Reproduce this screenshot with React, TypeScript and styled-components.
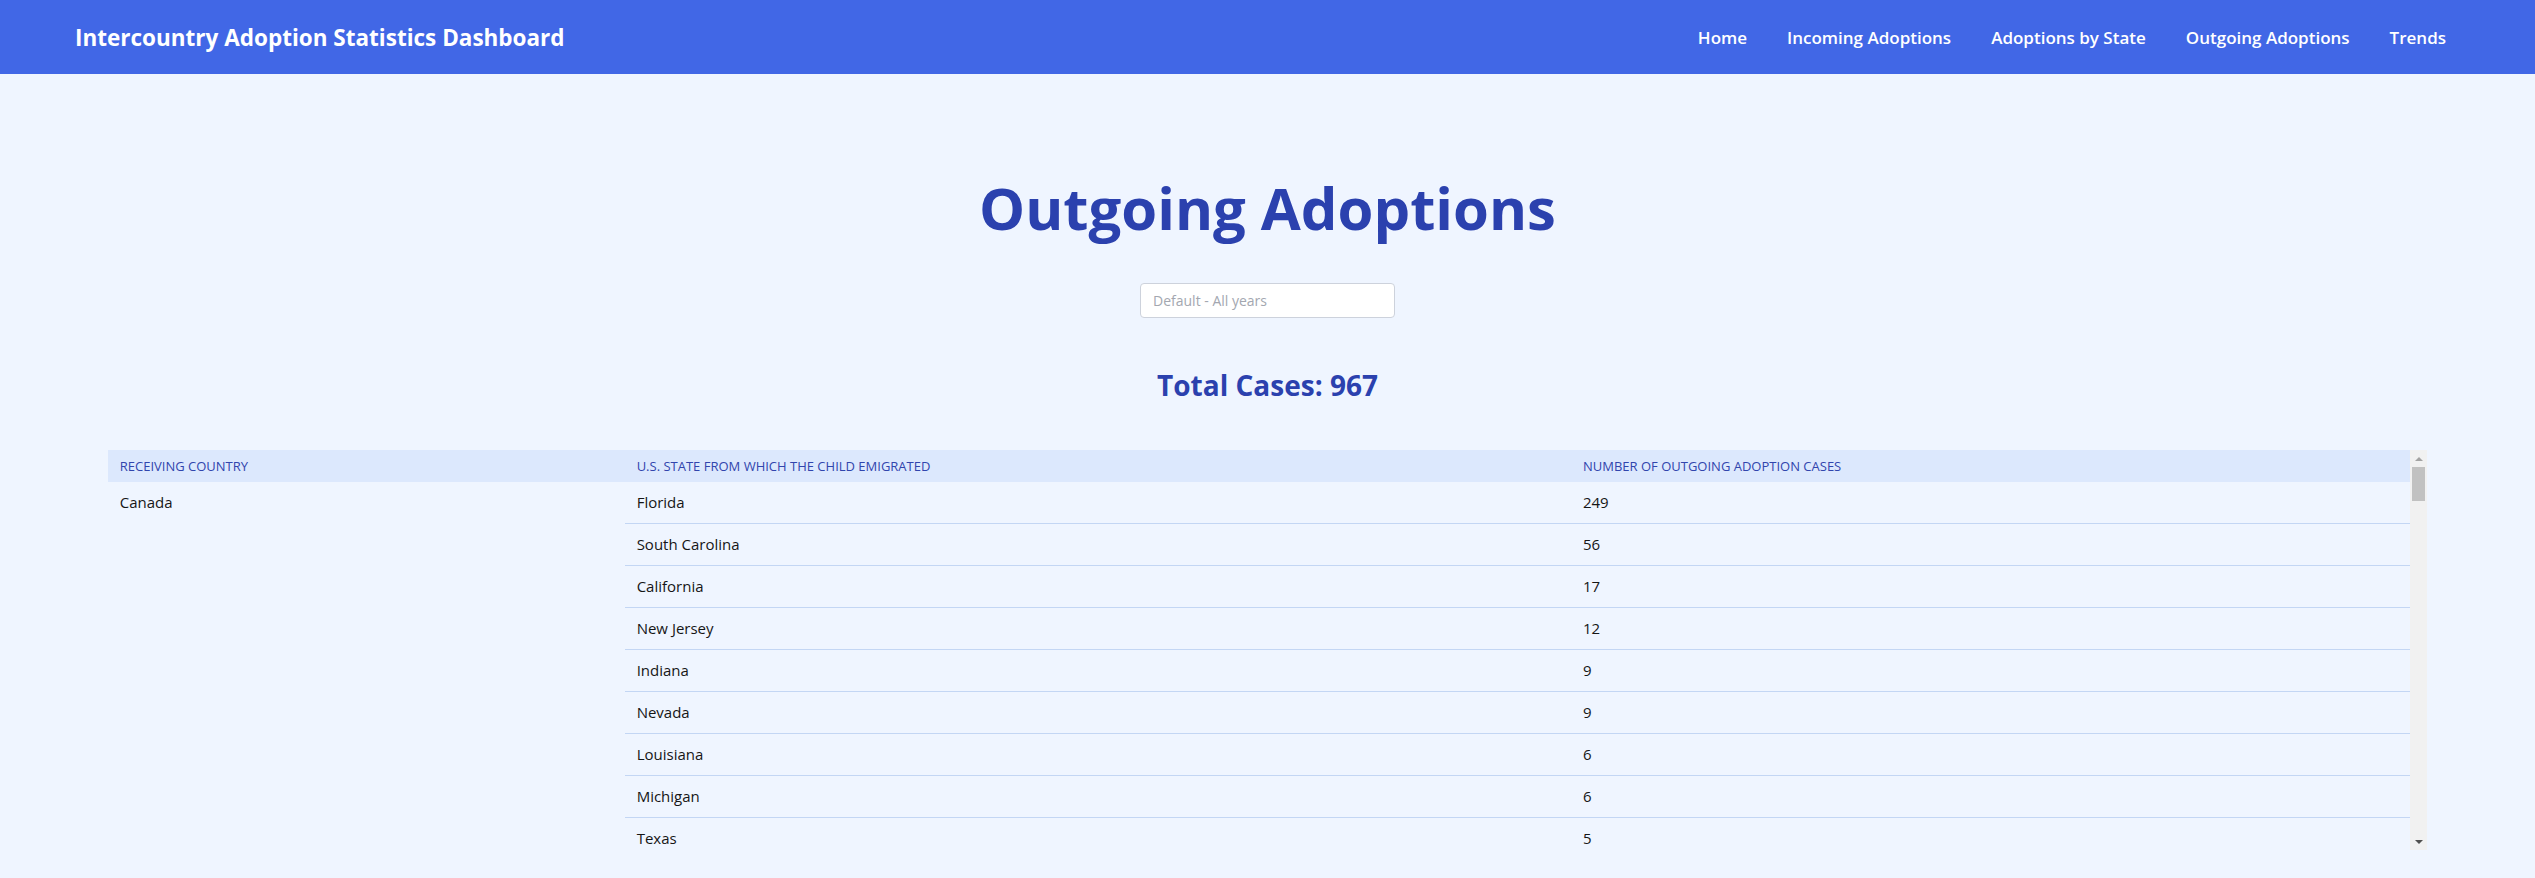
import { FC } from "react";
import styled, { createGlobalStyle } from "styled-components";

type Group = { country: string; states: [string, number][] };

const data: Group[] = [
  {
    country: "Canada",
    states: [
      ["Florida", 249], ["South Carolina", 56], ["California", 17], ["New Jersey", 12],
      ["Indiana", 9], ["Nevada", 9], ["Louisiana", 6], ["Michigan", 6], ["Texas", 5],
      ["Georgia", 4], ["Illinois", 4], ["New York", 4], ["Arizona", 3], ["Ohio", 3],
      ["Pennsylvania", 3], ["Colorado", 2], ["Maryland", 2], ["Missouri", 2],
      ["North Carolina", 2], ["Tennessee", 2], ["Utah", 2], ["Virginia", 2],
      ["Washington", 2], ["Alabama", 1], ["Connecticut", 1], ["Iowa", 1], ["Kansas", 1],
      ["Kentucky", 1], ["Massachusetts", 1], ["Minnesota", 1], ["Oklahoma", 1],
      ["Oregon", 1], ["Wisconsin", 1],
    ],
  },
  {
    country: "Netherlands",
    states: [
      ["Florida", 88], ["Texas", 31], ["California", 18], ["Georgia", 12], ["Illinois", 9],
      ["New York", 7], ["Ohio", 6], ["Arizona", 5], ["Pennsylvania", 4], ["Colorado", 3],
      ["Michigan", 3], ["North Carolina", 2], ["Virginia", 2], ["Washington", 2],
      ["Indiana", 1], ["Missouri", 1], ["Oregon", 1],
    ],
  },
  {
    country: "Ireland",
    states: [
      ["Florida", 41], ["California", 14], ["Texas", 9], ["New York", 6], ["Georgia", 4],
      ["Illinois", 3], ["Massachusetts", 2], ["New Jersey", 2], ["Ohio", 1], ["Virginia", 1],
    ],
  },
  {
    country: "Mexico",
    states: [
      ["Texas", 43], ["California", 19], ["Arizona", 8], ["Illinois", 4], ["Nevada", 3],
      ["Florida", 2], ["New Mexico", 2], ["Colorado", 1],
    ],
  },
  {
    country: "Germany",
    states: [
      ["Florida", 40], ["California", 11], ["Texas", 7], ["Nevada", 4], ["New York", 3],
      ["Arizona", 2], ["Colorado", 2], ["Pennsylvania", 1], ["Washington", 1],
    ],
  },
  {
    country: "United Kingdom",
    states: [
      ["Florida", 18], ["California", 9], ["New York", 6], ["Texas", 4], ["Georgia", 3],
      ["Illinois", 2], ["Maryland", 1], ["Michigan", 1],
    ],
  },
  {
    country: "Switzerland",
    states: [["Florida", 14], ["California", 6], ["New York", 3], ["Texas", 2], ["Virginia", 1]],
  },
  {
    country: "Australia",
    states: [["California", 9], ["Florida", 7], ["Texas", 3], ["Washington", 2], ["Hawaii", 1]],
  },
  {
    country: "Belgium",
    states: [["Florida", 12], ["Georgia", 4], ["California", 3], ["Ohio", 1]],
  },
  {
    country: "Norway",
    states: [["Florida", 5], ["Minnesota", 3]],
  },
];

const navItems = ["Home", "Incoming Adoptions", "Adoptions by State", "Outgoing Adoptions", "Trends"];

const totalCases = data.reduce(
  (sum, g) => sum + g.states.reduce((s, [, n]) => s + n, 0),
  0
);

// scroll rail: viewport 400px, header 32px, rows 42px, two 17px arrow buttons
const VIEW_H = 400;
const rowCount = data.reduce((n, g) => n + g.states.length, 0);
const contentH = 32 + rowCount * 42;
const thumbH = Math.max(20, Math.round(((VIEW_H - 34) * VIEW_H) / contentH));

const App: FC = () => {
  return (
    <>
      <GlobalStyle />
      <Header>
        <Brand>Intercountry Adoption Statistics Dashboard</Brand>
        <Nav>
          {navItems.map((item) => (
            <NavLink key={item} href="#">
              {item}
            </NavLink>
          ))}
        </Nav>
      </Header>
      <Main>
        <PageTitle>Outgoing Adoptions</PageTitle>
        <YearInput type="text" placeholder="Default - All years" />
        <Total>Total Cases: {totalCases}</Total>
        <ScrollFrame>
          <TableViewport>
            <Table>
              <colgroup>
                <col style={{ width: "22.45%" }} />
                <col style={{ width: "41.1%" }} />
                <col style={{ width: "36.45%" }} />
              </colgroup>
              <thead>
                <tr>
                  <Th>Receiving Country</Th>
                  <Th>U.S. State from which the child emigrated</Th>
                  <Th>Number of outgoing adoption cases</Th>
                </tr>
              </thead>
              <tbody>
                {data.map((group) =>
                  group.states.map(([state, count], i) => (
                    <tr key={group.country + state}>
                      {i === 0 && (
                        <CountryCell rowSpan={group.states.length}>{group.country}</CountryCell>
                      )}
                      <Td>{state}</Td>
                      <Td>{count}</Td>
                    </tr>
                  ))
                )}
              </tbody>
            </Table>
          </TableViewport>
          <Rail>
            <RailButton>
              <Arrow $dir="up" />
            </RailButton>
            <Thumb style={{ height: thumbH }} />
            <RailSpacer />
            <RailButton>
              <Arrow $dir="down" />
            </RailButton>
          </Rail>
        </ScrollFrame>
      </Main>
    </>
  );
};

export default App;

const GlobalStyle = createGlobalStyle`
  html, body {
    margin: 0;
    padding: 0;
    background: #eff5ff;
    font-family: "Open Sans", "Noto Sans", sans-serif;
  }
  * {
    box-sizing: border-box;
  }
`;

const Header = styled.header`
  display: flex;
  justify-content: space-between;
  align-items: center;
  height: 74px;
  padding: 0 73px 0 75px;
  background-color: #4167e6;
`;

const Brand = styled.h1`
  margin: 0;
  font-size: 22.5px;
  font-weight: 700;
  color: #fff;
`;

const Nav = styled.nav`
  display: flex;
  gap: 8px;
`;

const NavLink = styled.a`
  padding: 8px 16px;
  color: #fff;
  font-size: 17px;
  font-weight: 600;
  text-decoration: none;
`;

const Main = styled.main`
  display: flex;
  flex-direction: column;
  align-items: center;
  padding: 99px 0 24px;
`;

const PageTitle = styled.h2`
  margin: 0;
  font-size: 58px;
  line-height: 1.2;
  font-weight: 700;
  color: #2b41ae;
`;

const YearInput = styled.input`
  margin-top: 40px;
  width: 255px;
  height: 35px;
  padding: 0 12px;
  border: 1px solid #cdd2dc;
  border-radius: 4px;
  background: #fff;
  font-family: inherit;
  font-size: 14px;
  color: #333;

  &::placeholder {
    color: #a3a7b0;
  }
`;

const Total = styled.h3`
  margin: 51px 0 0;
  font-size: 28px;
  line-height: 1.2;
  font-weight: 700;
  color: #2b41ae;
`;

const ScrollFrame = styled.div`
  display: flex;
  margin-top: 48px;
  width: 91.5%;
  height: ${VIEW_H}px;
`;

const TableViewport = styled.div`
  flex: 1;
  overflow-y: auto;
  scrollbar-width: none;

  &::-webkit-scrollbar {
    display: none;
  }
`;

const Rail = styled.div`
  display: flex;
  flex-direction: column;
  width: 17px;
  background: #f1f1f1;
`;

const RailButton = styled.div`
  display: flex;
  justify-content: center;
  align-items: center;
  height: 17px;
`;

const Arrow = styled.span<{ $dir: "up" | "down" }>`
  width: 0;
  height: 0;
  border-left: 4px solid transparent;
  border-right: 4px solid transparent;
  ${({ $dir }) =>
    $dir === "up" ? "border-bottom: 4px solid #a3a3a3;" : "border-top: 4px solid #505050;"}
`;

const Thumb = styled.div`
  margin: 0 2px;
  background: #c1c1c1;
`;

const RailSpacer = styled.div`
  flex: 1;
`;

const Table = styled.table`
  width: 100%;
  border-collapse: collapse;
  table-layout: fixed;
`;

const Th = styled.th`
  position: sticky;
  top: 0;
  padding: 8px 12px;
  line-height: 16px;
  background: #dce8fd;
  color: #3145ad;
  font-size: 13px;
  font-weight: 500;
  text-align: left;
  text-transform: uppercase;
`;

const Td = styled.td`
  padding: 12px;
  line-height: 17px;
  font-size: 15px;
  color: #161616;
  vertical-align: top;
  border-bottom: 1px solid #c3d6f4;
`;

const CountryCell = styled(Td)`
  border-bottom: none;
`;
